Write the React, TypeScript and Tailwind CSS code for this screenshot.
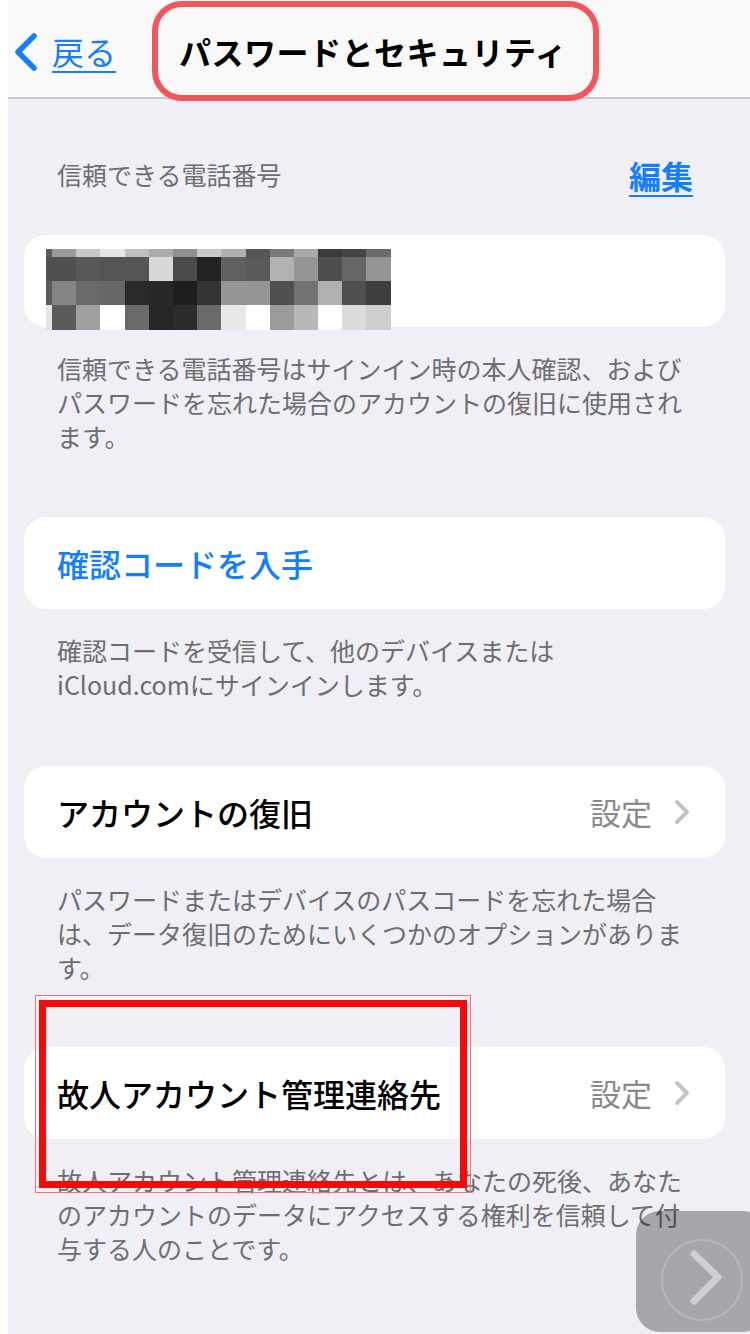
import React from "react";

const FONT = { fontFamily: '"Noto Sans CJK JP", "Noto Sans", sans-serif' };

// greyscale mosaic that masks the phone number
const MOSAIC: string[][] = [
  ["#5c5c5c", "#9a9a9a", "#c8c8c8", "#e6e6e6", "#c0c0c0", "#aaaaaa", "#8f8f8f", "#cacaca", "#b0b0b0", "#555555", "#7a7a7a", "#a8a8a8", "#3a3a3a", "#454545", "#6a6a6a"],
  ["#505050", "#505050", "#585858", "#555555", "#555555", "#d8d8d8", "#4a4a4a", "#222222", "#606060", "#5a5a5a", "#b2b2b2", "#959595", "#4e4e4e", "#666666", "#959595"],
  ["#5a5a5a", "#858585", "#6a6a6a", "#666666", "#2a2a2a", "#272727", "#1e1e1e", "#333333", "#959595", "#959595", "#505050", "#737373", "#b0b0b0", "#4f4f4f", "#3e3e3e"],
  ["#e4e4e4", "#5a5a5a", "#a0a0a0", "#ffffff", "#6a6a6a", "#262626", "#2c2c2c", "#6a6a6a", "#e8e8e8", "#ffffff", "#9b9b9b", "#b8b8b8", "#ffffff", "#dcdcdc", "#cfcfcf"],
];

function RowChevron() {
  return (
    <svg width="16" height="26" viewBox="0 0 16 26" fill="none">
      <path d="M3 3 L13 13 L3 23" stroke="#c4c4c7" strokeWidth="4" strokeLinecap="round" strokeLinejoin="round" />
    </svg>
  );
}

function Footer({ lines }: { lines: string[] }) {
  return (
    <div className="pl-[49px] pr-[40px] pt-[24px] text-[25px] leading-[34px] text-[#6d6d72]">
      {lines.map((l, i) => (
        <div key={i} className="whitespace-nowrap">{l}</div>
      ))}
    </div>
  );
}

function SettingRow({ label }: { label: string }) {
  return (
    <div className="ml-[16px] w-[701px] h-[92px] rounded-[22px] bg-white flex items-center pl-[33px] pr-[35px]">
      <span className="text-[32px] font-medium text-black flex-1">{label}</span>
      <span className="text-[31px] text-[#8a8a8e] mr-[22px]">設定</span>
      <RowChevron />
    </div>
  );
}

export default function App() {
  return (
    <div className="relative w-[750px] h-[1334px] overflow-hidden bg-white flex" style={FONT}>
      {/* main column */}
      <div className="ml-[8px] w-[742px] h-full bg-[#f0eff5] flex flex-col">
        {/* navigation bar */}
        <div className="h-[99px] bg-[#f9f9f9] border-b-2 border-[#c9c9cc] flex items-center">
          <svg width="30" height="40" viewBox="0 0 30 40" fill="none" className="ml-[2px] mt-[6px]">
            <path d="M24 4 L8 20 L24 36" stroke="#157efb" strokeWidth="5.5" strokeLinecap="round" strokeLinejoin="round" />
          </svg>
          <span className="ml-[12px] mt-[4px] text-[32px] text-[#157efb] underline underline-offset-[6px] decoration-2">戻る</span>
          <span className="ml-[63px] mt-[4px] text-[32px] font-bold text-black tracking-[0.5px]">パスワードとセキュリティ</span>
        </div>

        {/* section header */}
        <div className="h-[136px] flex items-start pt-[60px] pl-[49px] pr-[57px]">
          <span className="text-[25px] leading-[30px] text-[#6d6d72] flex-1">信頼できる電話番号</span>
          <span className="-mt-[2px] text-[32px] leading-[36px] font-bold text-[#157efb] underline underline-offset-[6px] decoration-2">編集</span>
        </div>

        {/* phone number card */}
        <div className="ml-[16px] w-[701px] h-[92px] rounded-[22px] bg-white pl-[22px] pt-[14px]">
          <div className="grid grid-cols-[6px_repeat(14,24.2px)] grid-rows-[8px_24px_24px_25px] w-[345px] h-[81px] blur-[0.4px]">
            {MOSAIC.flatMap((row, r) =>
              row.map((c, i) => <div key={`${r}-${i}`} style={{ backgroundColor: c }} />)
            )}
          </div>
        </div>
        <Footer
          lines={[
            "信頼できる電話番号はサインイン時の本人確認、および",
            "パスワードを忘れた場合のアカウントの復旧に使用され",
            "ます。",
          ]}
        />

        {/* get verification code */}
        <div className="mt-[64px] ml-[16px] w-[701px] h-[92px] rounded-[22px] bg-white flex items-center pl-[33px]">
          <span className="text-[32px] font-medium text-[#157efb]">確認コードを入手</span>
        </div>
        <Footer lines={["確認コードを受信して、他のデバイスまたは", "iCloud.comにサインインします。"]} />

        <div className="mt-[65px]">
          <SettingRow label="アカウントの復旧" />
        </div>
        <Footer
          lines={[
            "パスワードまたはデバイスのパスコードを忘れた場合",
            "は、データ復旧のためにいくつかのオプションがありま",
            "す。",
          ]}
        />

        <div className="mt-[63px]">
          <SettingRow label="故人アカウント管理連絡先" />
        </div>
        <Footer
          lines={[
            "故人アカウント管理連絡先とは、あなたの死後、あなた",
            "のアカウントのデータにアクセスする権利を信頼して付",
            "与する人のことです。",
          ]}
        />
      </div>

      {/* highlight around the title */}
      <div className="absolute left-[152px] top-[1px] w-[447px] h-[100px] rounded-[30px] border-[6px] border-[#f2555a]" />

      {/* highlight around the legacy contact row */}
      <div className="absolute left-[35px] top-[995px] w-[436px] h-[198px] border border-[#ff6f6f]" />
      <div className="absolute left-[39px] top-[1000px] w-[428px] h-[188px] border-[7px] border-[#f50a0a]" />

      {/* floating next button */}
      <div className="absolute left-[636px] top-[1211px] w-[130px] h-[121px] rounded-[24px] bg-black/30">
        <svg width="114" height="121" viewBox="0 0 114 121" fill="none">
          <circle cx="66" cy="69" r="40" stroke="#b6b6b8" strokeWidth="2" />
          <path d="M58 43 L82 66 L58 90" stroke="#cfcfd1" strokeWidth="7" strokeLinecap="round" strokeLinejoin="round" />
        </svg>
      </div>
    </div>
  );
}
